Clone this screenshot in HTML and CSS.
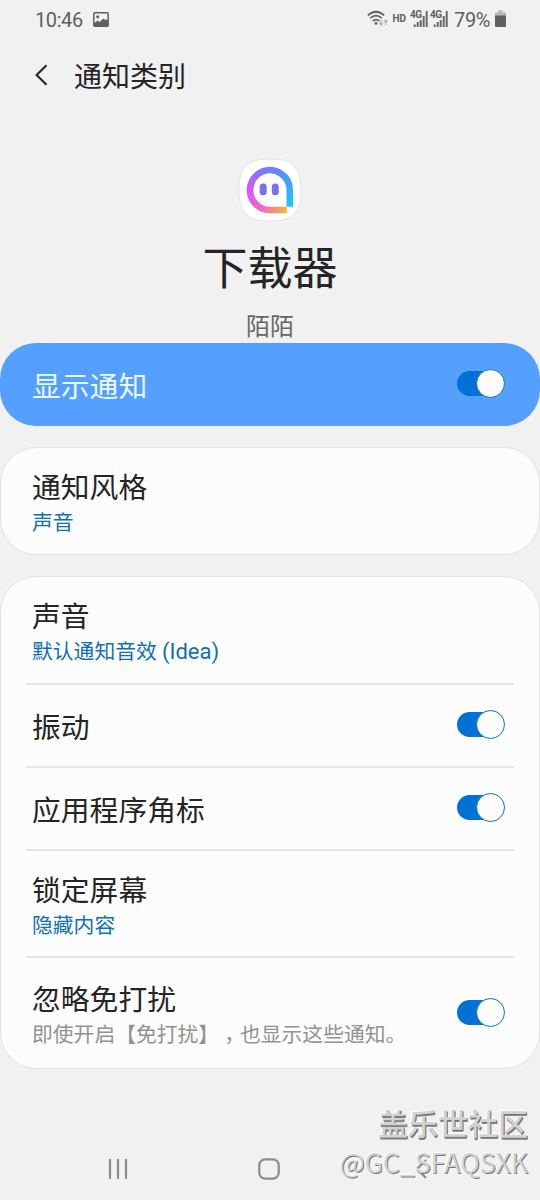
FILE: index.html
```html
<!DOCTYPE html>
<html lang="zh-CN">
<head>
    <meta charset="UTF-8">
    <title>通知类别</title>
    <link rel="stylesheet" href="styles.css">
</head>
<body>
    <div class="status">
        <span class="time">10:46</span>
        <svg class="photo" width="16" height="15" viewBox="0 0 16 15">
            <rect x="0.8" y="0.8" width="14.4" height="13.4" rx="1" fill="none" stroke="#5f5f5f" stroke-width="1.5"/>
            <path d="M1 11.5L4.5 8.5L6.5 10L10.5 6.5L12 8L13 7L15 9V14H1Z" fill="#5f5f5f"/>
            <circle cx="4.7" cy="4.8" r="1.5" fill="#5f5f5f"/>
        </svg>
        <svg class="wifi" width="22" height="18" viewBox="0 0 22 18">
            <g fill="none" stroke="#606060" stroke-width="1.7">
                <path d="M0.8 5.3Q9 -1.8 17.2 5.3"/>
                <path d="M3.3 8.2Q9 3.2 14.7 8.2"/>
                <path d="M5.8 11Q9 8.2 12.2 11"/>
            </g>
            <circle cx="9" cy="13.4" r="1.4" fill="#606060"/>
            <path d="M14 10V14.5M12.2 13L14 15L15.8 13M18.7 15V10.5M16.9 12L18.7 10L20.5 12" fill="none" stroke="#b4b4b4" stroke-width="1.3"/>
        </svg>
        <span class="hd">HD</span>
        <div class="signal">
            <span class="net">4G</span>
            <svg width="18" height="16" viewBox="0 0 18 16"><path d="M4.7 13.5V16M7.7 11V16M10.7 9V16M13.7 5V16M16.7 0V16" stroke="#686868" stroke-width="2"/></svg>
        </div>
        <div class="signal">
            <span class="net">4G</span>
            <svg width="18" height="16" viewBox="0 0 18 16"><path d="M4.7 13.5V16M7.7 11V16M10.7 9V16M13.7 5V16M16.7 0V16" stroke="#686868" stroke-width="2"/></svg>
        </div>
        <span class="percent">79%</span>
        <svg class="battery" width="11" height="17" viewBox="0 0 11 17">
            <path d="M3 0.5H8V2.5H11V6H0V2.5H3Z" fill="#b8b8b8"/>
            <path d="M0 5.5H11V16Q11 17 10 17H1Q0 17 0 16Z" fill="#606060"/>
        </svg>
    </div>

    <div class="header">
        <svg width="13" height="22" viewBox="0 0 13 22"><path d="M11.5 1.3L1.6 11L11.5 20.7" fill="none" stroke="#252525" stroke-width="2.1"/></svg>
        <h1>通知类别</h1>
    </div>

    <div class="app">
        <svg class="logo" width="64" height="64" viewBox="0 0 64 64">
            <defs>
                <linearGradient id="left" gradientUnits="userSpaceOnUse" x1="12" y1="35" x2="24" y2="12">
                    <stop offset="0" stop-color="#e055f5"/>
                    <stop offset="1" stop-color="#7878fb"/>
                </linearGradient>
                <linearGradient id="right" gradientUnits="userSpaceOnUse" x1="24" y1="12" x2="52" y2="46">
                    <stop offset="0" stop-color="#7878fb"/>
                    <stop offset="0.5" stop-color="#4c98f8"/>
                    <stop offset="1" stop-color="#20c4f6"/>
                </linearGradient>
                <linearGradient id="bottom" gradientUnits="userSpaceOnUse" x1="12" y1="34" x2="49" y2="52">
                    <stop offset="0" stop-color="#e055f5"/>
                    <stop offset="0.45" stop-color="#ee6eb8"/>
                    <stop offset="1" stop-color="#fdb52c"/>
                </linearGradient>
            </defs>
            <path d="M32 1C55 1 63 9 63 32S55 63 32 63S1 55 1 32S9 1 32 1Z" fill="#fff" stroke="#e4e4e4" stroke-width="1"/>
            <g fill="none" stroke-width="6.6">
                <path d="M12 31.8A20 20 0 0 0 32 52H48.7" stroke="url(#bottom)"/>
                <path d="M12 32.5A20 20 0 0 1 24.5 13.5" stroke="url(#left)"/>
                <path d="M24.2 13.6A20 20 0 0 1 51.8 32V48.7" stroke="url(#right)"/>
            </g>
            <rect x="21.7" y="25.6" width="7" height="11.6" rx="3.5" fill="#7673e9"/>
            <rect x="33.8" y="25.6" width="7" height="11.6" rx="3.5" fill="#7673e9"/>
        </svg>
        <h2>下载器</h2>
        <p>陌陌</p>
    </div>

    <div class="main-switch">
        <span class="title">显示通知</span>
        <span class="toggle"></span>
    </div>

    <div class="card">
        <div class="row tall">
            <div>
                <div class="title">通知风格</div>
                <div class="sub">声音</div>
            </div>
        </div>
    </div>

    <div class="card">
        <div class="row tall">
            <div>
                <div class="title">声音</div>
                <div class="sub">默认通知音效 <span class="tone">(Idea)</span></div>
            </div>
        </div>
        <div class="row">
            <div class="title">振动</div>
            <span class="toggle"></span>
        </div>
        <div class="row">
            <div class="title">应用程序角标</div>
            <span class="toggle"></span>
        </div>
        <div class="row tall">
            <div>
                <div class="title">锁定屏幕</div>
                <div class="sub">隐藏内容</div>
            </div>
        </div>
        <div class="row last">
            <div>
                <div class="title">忽略免打扰</div>
                <div class="sub gray">即使开启【免打扰】<span class="comma">，</span>也显示这些通知。</div>
            </div>
            <span class="toggle"></span>
        </div>
    </div>

    <div class="navbar">
        <svg width="20" height="20" viewBox="0 0 20 20"><path d="M2 1V19M10 1V19M18 1V19" stroke="#8c8c8c" stroke-width="2.2" stroke-linecap="round"/></svg>
        <svg width="22" height="22" viewBox="0 0 22 22"><rect x="1.3" y="1.3" width="19.4" height="19.4" rx="6" fill="none" stroke="#8c8c8c" stroke-width="2.2"/></svg>
        <svg class="nav-back" width="12" height="20" viewBox="0 0 12 20"><path d="M11 1L2 10L11 19" fill="none" stroke="#8c8c8c" stroke-width="2.2"/></svg>
    </div>

    <div class="watermark">
        <div class="community">盖乐世社区</div>
        <div class="user">@GC_SFAQSXK</div>
    </div>
</body>
</html>
```

FILE: styles.css
```css
* {
    box-sizing: border-box;
}
body {
    margin: 0;
    width: 540px;
    height: 1200px;
    position: relative;
    overflow: hidden;
    background-color: #f1f1f1;
    color: #252525;
    font-family: Roboto, "Noto Sans CJK SC", sans-serif;
    text-spacing-trim: space-all;
}
h1, h2, p {
    margin: 0;
    font-weight: 400;
}
svg {
    display: block;
    flex: none;
}
.status {
    display: flex;
    align-items: center;
    height: 40px;
    padding: 0 34px 0 35px;
    color: #606060;
    font-size: 20px;
}
.time {
    letter-spacing: -0.4px;
}
.photo {
    margin-left: 10px;
    margin-bottom: 2px;
}
.wifi {
    margin-left: auto;
    margin-bottom: 3px;
}
.hd {
    margin-left: 4px;
    margin-bottom: 3px;
    font-size: 10px;
    font-weight: 700;
}
.signal {
    position: relative;
    margin-left: 2px;
    margin-bottom: 2px;
}
.hd + .signal {
    margin-left: 4px;
}
.net {
    position: absolute;
    left: 0;
    top: -1px;
    font-size: 10px;
    line-height: 10px;
    font-weight: 700;
    letter-spacing: -0.5px;
}
.percent {
    margin-left: 6px;
    letter-spacing: -0.4px;
}
.battery {
    margin-left: 5px;
    margin-bottom: 3px;
}
.header {
    display: flex;
    align-items: center;
    gap: 26px;
    height: 70px;
    padding-left: 35px;
}
.header h1 {
    margin-top: 5px;
    font-size: 28px;
    line-height: 40px;
}
.app {
    display: flex;
    flex-direction: column;
    align-items: center;
    height: 233px;
    padding-top: 48px;
}
.app h2 {
    margin-top: 15px;
    font-size: 45px;
    line-height: 66px;
}
.app p {
    margin-top: 6px;
    color: #666;
    font-size: 24px;
    line-height: 36px;
}
.main-switch {
    display: flex;
    align-items: center;
    justify-content: space-between;
    height: 83px;
    padding: 0 35px 0 32px;
    border-radius: 36px;
    background: #559fff;
    color: #e9faff;
}
.card {
    margin-top: 21px;
    padding: 0 25px;
    border: 1px solid #e2e2e2;
    border-radius: 36px;
    background: #fcfcfc;
}
.row {
    display: flex;
    align-items: center;
    justify-content: space-between;
    height: 83px;
    padding: 0 9px 0 6px;
}
.row + .row {
    border-top: 2px solid #e4e4e4;
}
.tall {
    height: 107px;
}
.tall:first-child {
    height: 106px;
}
.last {
    height: 112px;
}
.title {
    margin-top: 4px;
    font-size: 28.8px;
    line-height: 40px;
}
.sub {
    color: #0f70b7;
    font-size: 20.8px;
    line-height: 30px;
}
.tone {
    font-size: 22px;
}
.gray {
    color: #929292;
}
.comma {
    padding-left: 5px;
    letter-spacing: -5px;
}
/* track is narrower than the knob, the knob sticks out on the right */
.toggle {
    position: relative;
    flex: none;
    width: 48px;
    height: 25px;
    margin-bottom: 2px;
    border-radius: 13px;
    background: linear-gradient(to right, #0072d6 36px, transparent 36px);
}
.toggle::after {
    content: "";
    position: absolute;
    right: 0;
    top: -2px;
    box-sizing: border-box;
    width: 29px;
    height: 29px;
    border: 1.5px solid #0f6fc0;
    border-radius: 50%;
    background: #fcfcfc;
}
.navbar {
    display: flex;
    align-items: center;
    margin-top: 89px;
    padding-left: 108px;
    gap: 130px;
}
.nav-back {
    margin-left: 5px;
}
.watermark {
    position: absolute;
    right: 12px;
    top: 1105px;
    color: #d2d2d2;
    text-align: right;
    white-space: nowrap;
    text-shadow: 1px 1px 0 #777, -1px -1px 1px #fff;
}
.community {
    font-size: 30px;
    line-height: 40px;
    font-weight: 500;
    text-shadow: 1px 1px 0 #777, 1px 2px 0 #888, -1px -1px 1px #fff;
}
.user {
    margin-top: -2px;
    font-family: "Noto Sans CJK SC", sans-serif;
    font-size: 26.6px;
    line-height: 38px;
}
```
